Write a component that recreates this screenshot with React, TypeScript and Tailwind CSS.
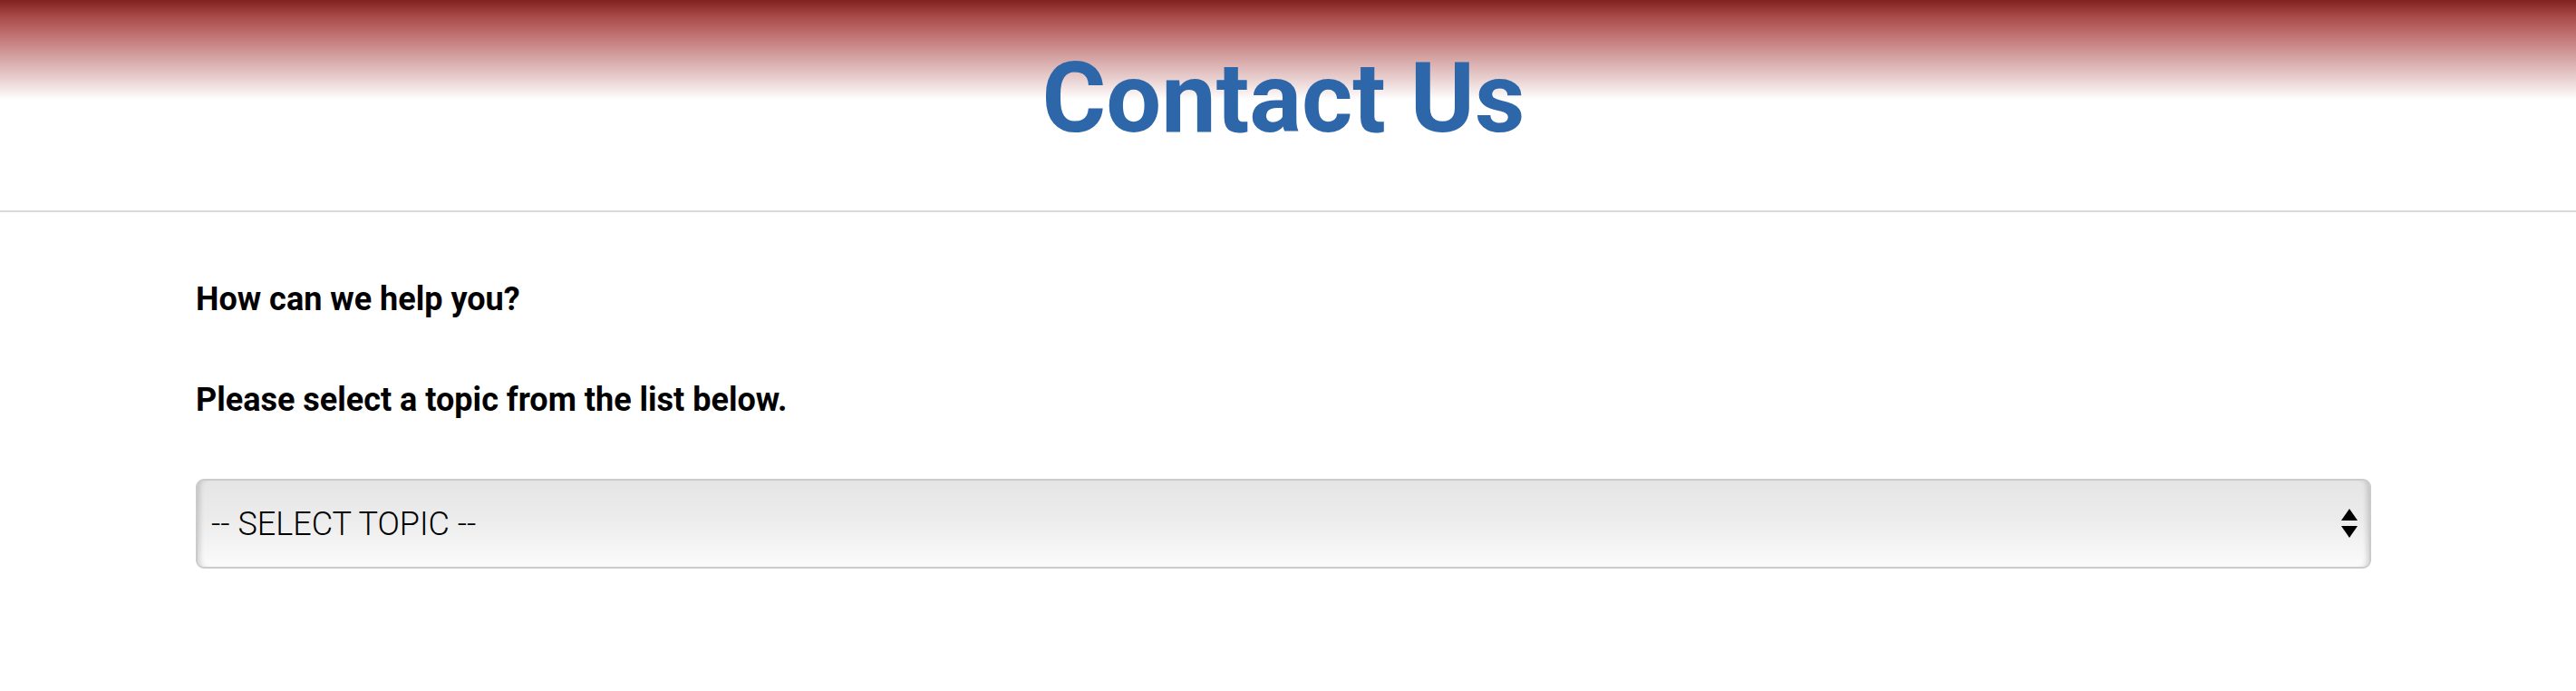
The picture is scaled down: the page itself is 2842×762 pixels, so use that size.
import React from "react";

export default function App() {
  return (
    <div className="min-h-screen w-full bg-white" style={{ fontFamily: "Roboto, 'Liberation Sans', sans-serif" }}>
      <header className="h-[234px] border-b-2 border-[#dadada] bg-[linear-gradient(to_bottom,#80201f_0px,#a94a49_18px,#c27474_40px,#d6a6a6_65px,#ead2d2_88px,#ffffff_110px)] pt-[54px]">
        <h1 className="pr-[10px] text-center text-[108px] font-bold leading-[108px] text-[#2d67a9]">Contact Us</h1>
      </header>
      <main className="ml-[216px] w-[2400px] pt-[78px]">
        <p className="text-[36px] font-bold leading-[36px] text-black">How can we help you?</p>
        <p className="mt-[75px] text-[36px] font-bold leading-[36px] text-black">Please select a topic from the list below.</p>
        <div className="mt-[69px] flex h-[99px] items-center justify-between rounded-[9px] border-2 border-[#cbcbcb] bg-[linear-gradient(to_bottom,#e5e5e5_0%,#ececec_45%,#fbfbfb_100%)] pl-[15px] pr-[12px] shadow-[inset_7px_0_6px_-5px_rgba(0,0,0,0.18),inset_-7px_0_6px_-5px_rgba(0,0,0,0.18)]">
          <span className="text-[36px] font-light leading-none text-black">-- SELECT TOPIC --</span>
          <svg width="18" height="34" viewBox="0 0 18 34" className="mr-[1px]">
            <polygon points="9,0 18,13 0,13" fill="#000" />
            <polygon points="0,19 18,19 9,32" fill="#000" />
          </svg>
        </div>
      </main>
    </div>
  );
}
